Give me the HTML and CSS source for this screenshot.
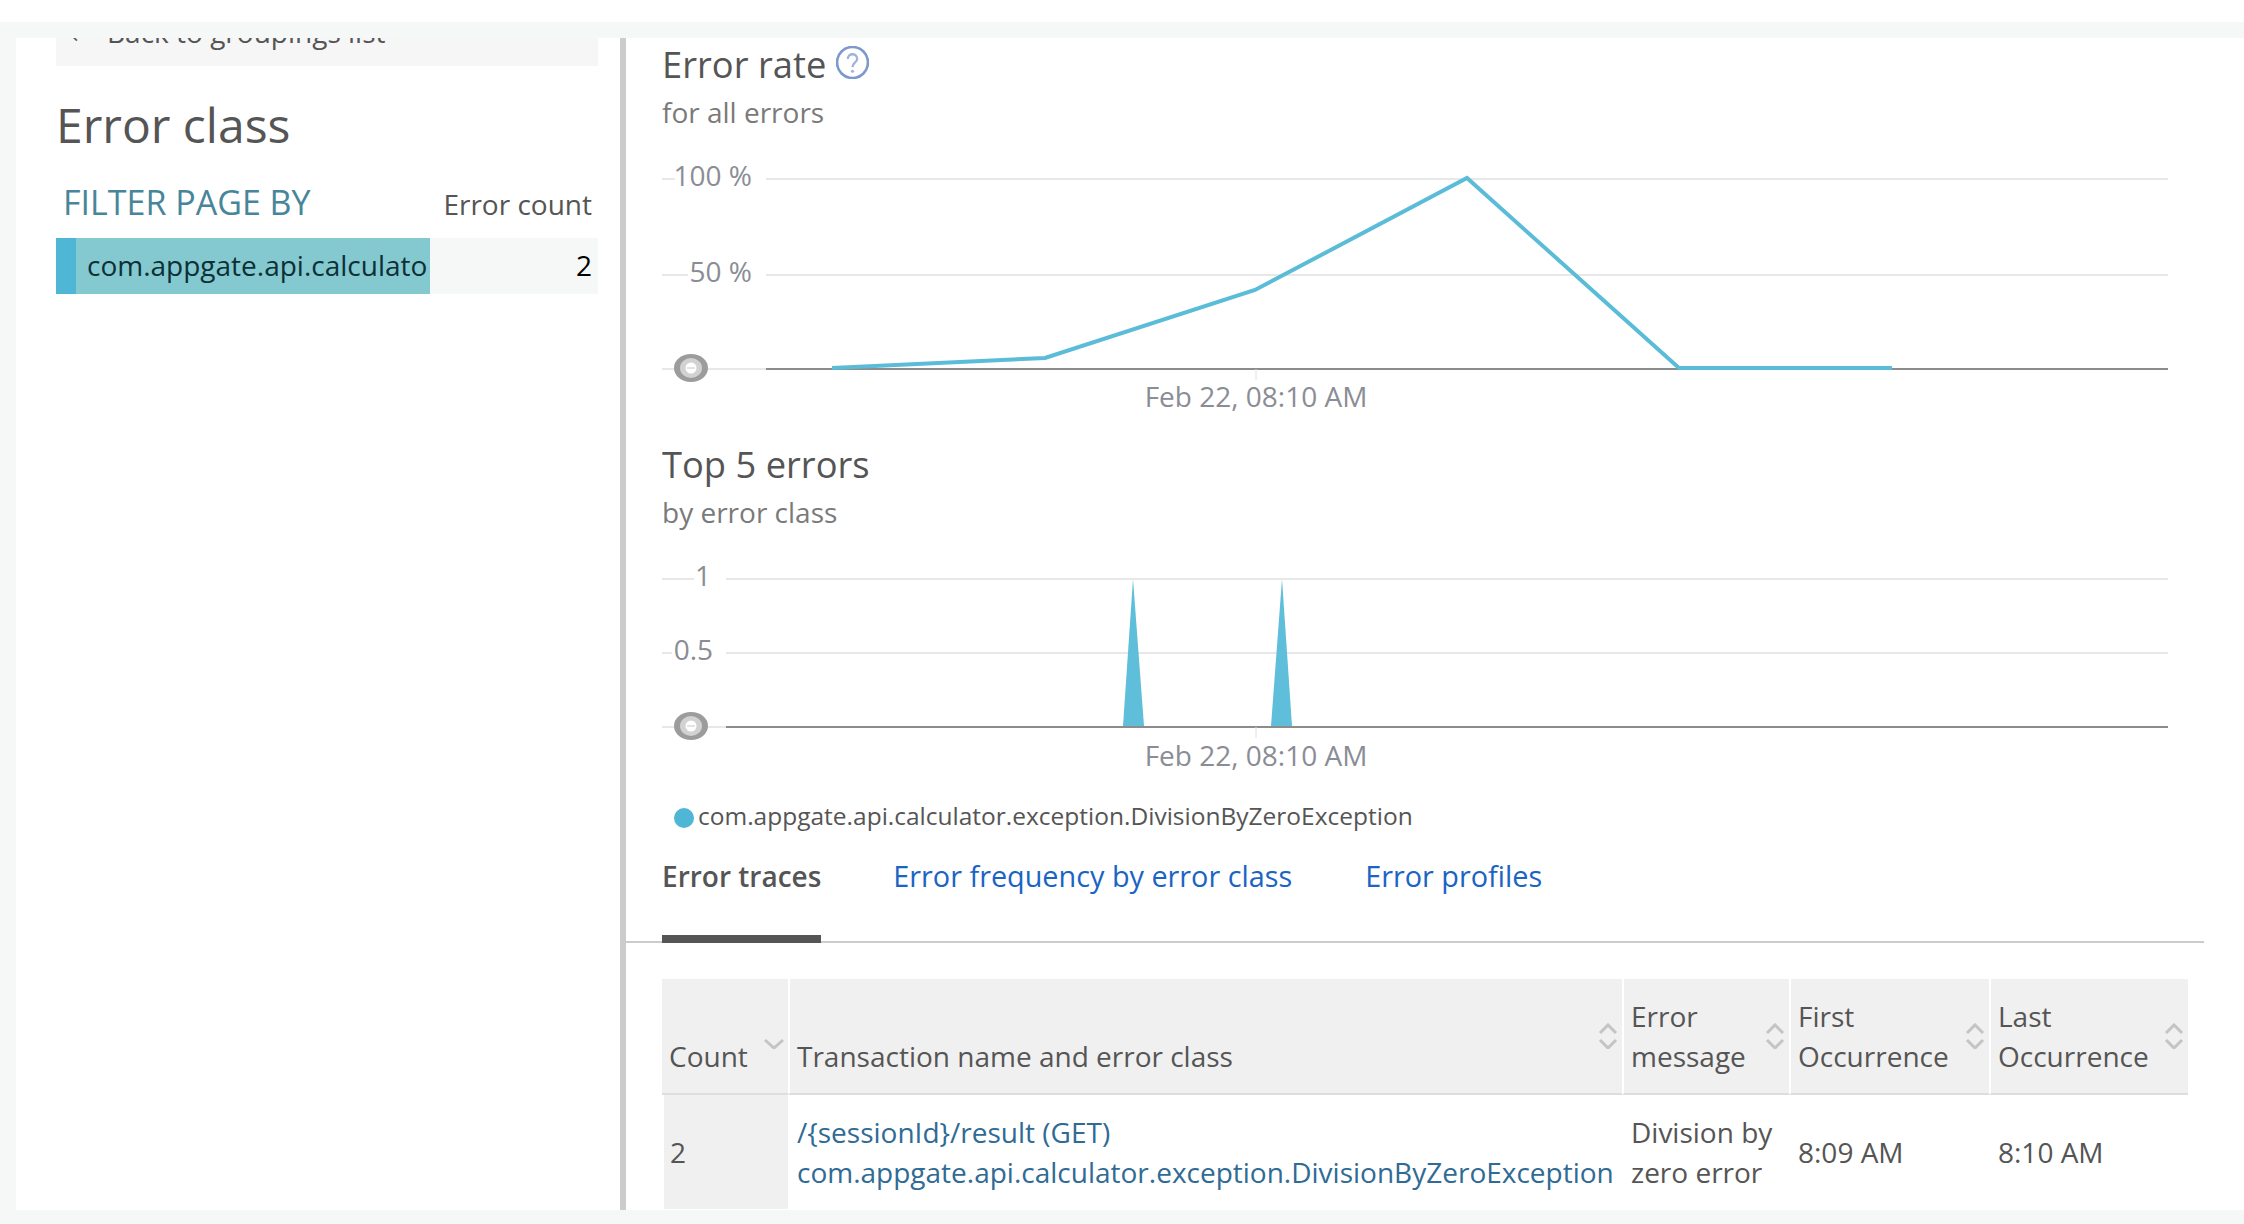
FILE: index.html
```html
<!DOCTYPE html>
<html>
<head>
	<title>Error analytics</title>
	<link rel="stylesheet" href="styles.css">
</head>
<body>

<svg class="defs" width="0" height="0">
  <symbol id="sort-both" viewBox="0 0 20 26">
    <path d="M2 10 L10 2 L18 10 M2 17 L10 25 L18 17" fill="none" stroke="#c4c4c4" stroke-width="3"/>
  </symbol>
  <symbol id="sort-down" viewBox="0 0 20 26">
    <path d="M1 17 L10 25 L19 17" fill="none" stroke="#c4c4c4" stroke-width="3"/>
  </symbol>
  <symbol id="eye" viewBox="0 0 34 28">
    <ellipse cx="17" cy="14" rx="17" ry="14" fill="#9c9c9c"/>
    <ellipse cx="17" cy="14" rx="11" ry="10" fill="#d2d2d2"/>
    <circle cx="17" cy="14" r="5.5" fill="#fff"/>
    <path d="M13 14 H21" stroke="#c8c8c8" stroke-width="1"/>
  </symbol>
</svg>

<div class="top-strip"></div>

<div class="main">
  <aside class="side">
    <div class="back"><a href="#"><span class="back-arrow">←</span>Back to groupings list</a></div>
    <h1>Error class</h1>
    <div class="filter-head">
      <span class="filter-title">FILTER PAGE BY</span>
      <span class="filter-count">Error count</span>
    </div>
    <div class="filter-row">
      <div class="filter-bar">com.appgate.api.calculato</div>
      <div class="filter-num">2</div>
    </div>
  </aside>

  <section class="content">
    <h2>Error rate <svg class="help" width="33" height="33" viewBox="0 0 32 32"><circle cx="16" cy="16" r="15" fill="none" stroke="#7d98cf" stroke-width="2.6"/><path d="M11.5 12.5 C11.5 6.5 20.5 6.5 20.5 12.5 C20.5 16 16 16 16 20.5" fill="none" stroke="#9fb2d8" stroke-width="2.2"/><circle cx="16" cy="24.5" r="1.5" fill="#9fb2d8"/></svg></h2>
    <p class="sub">for all errors</p>
    <svg class="chart chart-rate" viewBox="662 132 1506 300">
      <path class="grid" d="M662 179 H675 M766 179 H2168 M662 275 H688 M766 275 H2168 M662 369 H766"/>
      <path class="axis" d="M766 369 H2168"/>
      <path class="tick" d="M1256 369 V380"/>
      <text class="lbl" x="752" y="186" text-anchor="end">100 %</text>
      <text class="lbl" x="752" y="282" text-anchor="end">50 %</text>
      <use href="#eye" x="674" y="354" width="34" height="28"/>
      <polyline class="line" points="832,368 1045,358 1255,290 1467,178 1679,368 1892,368"/>
      <text class="lbl" x="1256" y="407" text-anchor="middle">Feb 22, 08:10 AM</text>
    </svg>

    <h2>Top 5 errors</h2>
    <p class="sub">by error class</p>
    <svg class="chart chart-top" viewBox="662 532 1506 248">
      <path class="grid" d="M662 579 H694 M726 579 H2168 M662 653 H672 M726 653 H2168 M662 727 H726"/>
      <path class="axis" d="M726 727 H2168"/>
      <path class="tick" d="M1256 727 V738"/>
      <text class="lbl" x="711" y="586" text-anchor="end">1</text>
      <text class="lbl" x="713" y="660" text-anchor="end">0.5</text>
      <use href="#eye" x="674" y="712" width="34" height="28"/>
      <polygon class="spike" points="1123,726 1133,579 1144,726"/>
      <polygon class="spike" points="1271,726 1282,579 1292,726"/>
      <text class="lbl" x="1256" y="766" text-anchor="middle">Feb 22, 08:10 AM</text>
    </svg>

    <div class="legend"><span class="legend-dot"></span>com.appgate.api.calculator.exception.DivisionByZeroException</div>

    <nav class="tabs">
      <a class="tab active" href="#">Error traces</a>
      <a class="tab" href="#">Error frequency by error class</a>
      <a class="tab" href="#">Error profiles</a>
    </nav>

    <table class="traces">
      <colgroup>
        <col class="c-count"><col class="c-name"><col class="c-msg"><col class="c-first"><col class="c-last">
      </colgroup>
      <thead>
        <tr>
          <th>Count<svg class="sort"><use href="#sort-down"/></svg></th>
          <th>Transaction name and error class<svg class="sort"><use href="#sort-both"/></svg></th>
          <th>Error<br>message<svg class="sort"><use href="#sort-both"/></svg></th>
          <th>First<br>Occurrence<svg class="sort"><use href="#sort-both"/></svg></th>
          <th>Last<br>Occurrence<svg class="sort"><use href="#sort-both"/></svg></th>
        </tr>
      </thead>
      <tbody>
        <tr>
          <td class="cell-count">2</td>
          <td><a href="#">/{sessionId}/result (GET)<br>com.appgate.api.calculator.exception.DivisionByZeroException</a></td>
          <td>Division by<br>zero error</td>
          <td>8:09 AM</td>
          <td>8:10 AM</td>
        </tr>
      </tbody>
    </table>
  </section>
</div>

</body>
</html>
```

FILE: styles.css
```css
html, body {
    margin: 0;
    height: 1224px;
    overflow: hidden;
}

body {
    background: #f6f8f8;
    font-family: "Open Sans", "Liberation Sans", sans-serif;
    font-size: 28px;
    line-height: 40px;
    color: #555;
}

a {
    text-decoration: none;
}

.defs {
    display: block;
    height: 0;
}

.top-strip {
    height: 22px;
    background: #fff;
    margin-bottom: 16px;
}

.main {
    display: flex;
    height: 1172px;
    margin-left: 16px;
    background: #fff;
    overflow: hidden;
}

/* left column */
.side {
    width: 542px;
    flex: none;
    padding: 0 22px 0 40px;
    border-right: 6px solid #ccc;
}

.back {
    height: 28px;
    background: #f6f6f6;
    overflow: hidden;
}

.back a {
    display: block;
    margin-top: -26px;
    color: #555;
}

.back-arrow {
    display: inline-block;
    width: 51px;
    padding-left: 16px;
    box-sizing: border-box;
    font-family: "DejaVu Sans", sans-serif;
    font-size: 18px;
}

h1 {
    margin: 29px 0 0;
    font-size: 48px;
    line-height: 60px;
    font-weight: 400;
}

.filter-head {
    display: flex;
    justify-content: space-between;
    align-items: baseline;
    margin: 27px 0 14px;
    padding: 0 6px 0 7px;
}

.filter-title {
    font-size: 34px;
    color: #47869a;
}

.filter-row {
    display: flex;
    justify-content: space-between;
    height: 56px;
    line-height: 54px;
    background: #f6f8f8;
}

.filter-bar {
    width: 343px;
    padding-left: 11px;
    border-left: 20px solid #4fb6d6;
    background: #84c9d0;
    color: #0d3036;
    font-size: 28px;
    white-space: nowrap;
    overflow: hidden;
}

.filter-num {
    padding-right: 6px;
    color: #000;
}

/* right column */
.content {
    flex: 1;
    padding: 0 40px 0 36px;
    min-width: 0;
}

h2 {
    margin: 4px 0 0;
    font-size: 36.3px;
    line-height: 44px;
    font-weight: 400;
}

.chart + h2 {
    margin-top: 10px;
}

.help {
    vertical-align: top;
    margin: 4px 0 0;
}

.sub {
    margin: 6px 0 0;
    color: #7a7a7a;
}

.chart {
    display: block;
    width: 1506px;
}

.chart-rate {
    height: 300px;
}

.chart-top {
    height: 248px;
}

.grid {
    stroke: #e8e8e8;
    stroke-width: 2;
    fill: none;
}

.axis {
    stroke: #8c8c8c;
    stroke-width: 2;
    fill: none;
}

.tick {
    stroke: #e0e0e0;
    stroke-width: 1;
}

.lbl {
    font-size: 28px;
    fill: #8a8d95;
}

.line {
    fill: none;
    stroke: #5bbcd8;
    stroke-width: 4;
}

.spike {
    fill: #5fbeda;
}

.legend {
    display: flex;
    align-items: center;
    margin: 18px 0 0 12px;
    font-size: 24.5px;
    line-height: 36px;
}

.legend-dot {
    width: 20px;
    height: 20px;
    margin: 4px 4px 0 0;
    border-radius: 50%;
    background: #4fb6d6;
}

.tabs {
    display: flex;
    gap: 73px;
    margin: 22px 0 0 -36px;
    padding-left: 36px;
    border-bottom: 2px solid #ccc;
}

.tab {
    height: 79px;
    margin-bottom: -2px;
    border-bottom: 8px solid transparent;
    color: #1a64c4;
    font-size: 28.8px;
}

.tab.active {
    margin-right: -1px;
    color: #555;
    font-size: 28px;
    font-weight: 600;
    border-bottom-color: #555;
}

.traces {
    width: 1526px;
    margin-top: 36px;
    table-layout: fixed;
    border-collapse: separate;
    border-spacing: 0;
}

.c-count { width: 126px; }
.c-name { width: 834px; }
.c-msg { width: 167px; }
.c-first { width: 200px; }
.c-last { width: 199px; }

.traces th {
    position: relative;
    height: 97px;
    padding: 0 0 17px 7px;
    vertical-align: bottom;
    text-align: left;
    font-weight: 400;
    background: #f0f0f0;
    border-left: 2px solid #fff;
    border-bottom: 2px solid #ddd;
}

.traces th:first-child {
    border-left: 0;
    padding-left: 7px;
}

.traces td {
    height: 114px;
    padding: 0 0 0 7px;
    border-left: 2px solid #fff;
    white-space: nowrap;
}

.traces td a {
    color: #2f6b94;
}

.traces td.cell-count {
    background: #f0f0f0;
    padding-left: 6px;
}

.sort {
    position: absolute;
    top: 44px;
    right: 4px;
    width: 20px;
    height: 26px;
}
```
